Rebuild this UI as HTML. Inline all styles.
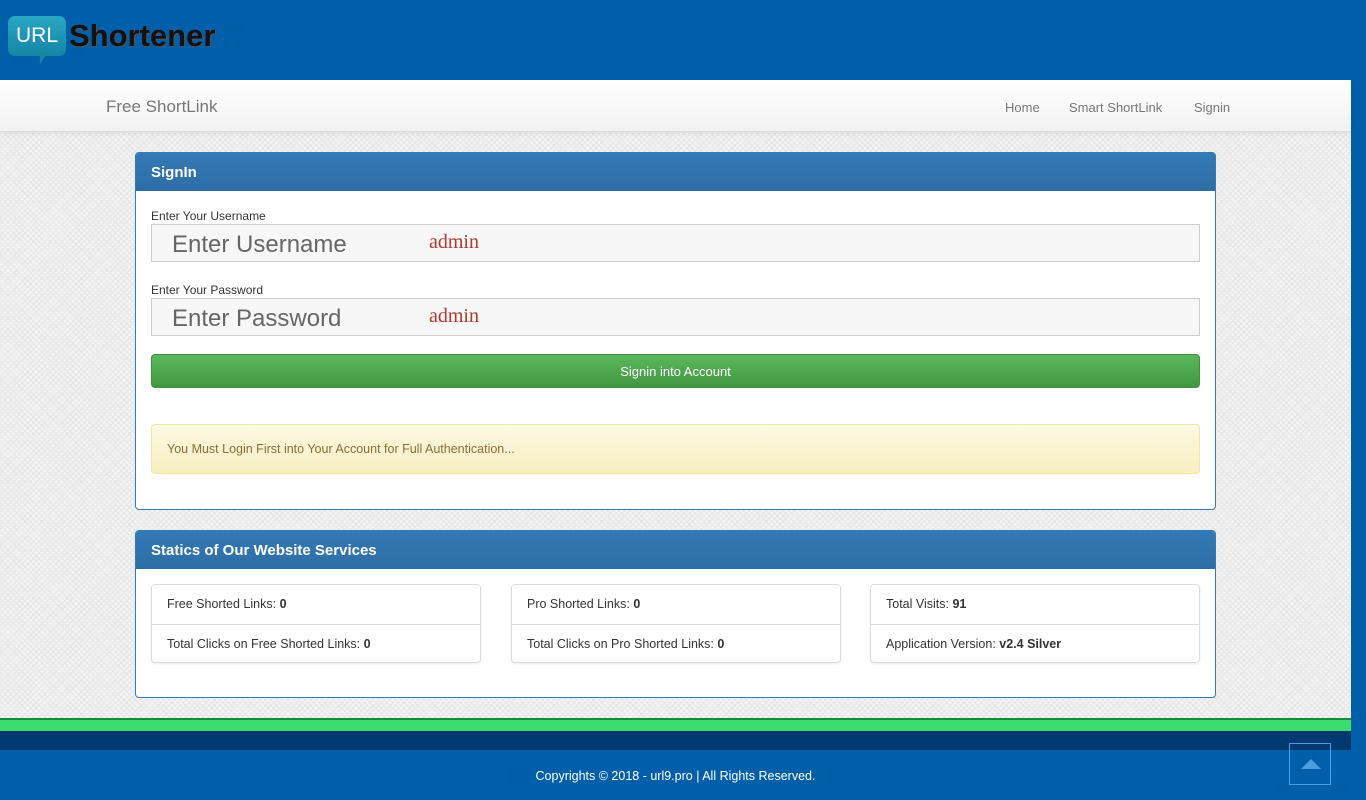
<!DOCTYPE html>
<html><head><meta charset="utf-8"><style>
*{box-sizing:border-box;margin:0;padding:0}
body{width:1366px;height:800px;overflow:hidden;font-family:"Liberation Sans",sans-serif;background:#005fa8;position:relative}
.top{position:absolute;left:0;top:0;width:1366px;height:80px;background:#005fa8}
.logo{position:absolute;left:8px;top:16px;width:58px;height:40px;background:linear-gradient(#2aa6c4,#1585a6);border-radius:7px;color:#fff;font-size:21px;line-height:40px;text-align:center}
.logo:after{content:"";position:absolute;left:32px;top:36px;border-left:8px solid #1585a6;border-bottom:12px solid transparent}
.logot{position:absolute;left:69px;top:18px;font-size:31px;font-weight:bold;color:#111;text-shadow:1px 1px 1px #555}
.main{position:absolute;left:0;top:80px;width:1351px;height:638px;background-color:#f3f3f3;background-image:repeating-linear-gradient(45deg,#e6e6e6 0 1px,transparent 1px 4px),repeating-linear-gradient(-45deg,#e6e6e6 0 1px,transparent 1px 4px)}
.nav{position:absolute;left:0;top:0;width:1351px;height:52px;background:linear-gradient(#fff,#f2f2f2);border-bottom:1px solid #ddd;box-shadow:0 2px 4px rgba(0,0,0,.06)}
.brand{position:absolute;left:106px;top:17px;font-size:17px;color:#777}
.nav a{position:absolute;top:20px;font-size:13px;color:#777}
.panel{position:absolute;left:135px;width:1081px;background:#fff;border:1px solid #337ab7;border-radius:4px;overflow:hidden}
.ph{height:38px;background:linear-gradient(#337ab7,#2e6da4);color:#fff;font-size:15px;font-weight:bold;padding:11px 15px 0}
.lbl{position:absolute;left:15px;font-size:12px;color:#333}
.inp{position:absolute;left:15px;width:1049px;height:38px;background:#f7f7f7;border:1px solid #ccc}
.inp span{position:absolute;left:20px;top:6px;font-size:24px;color:#666}
.inp i{position:absolute;left:277px;top:6px;font-style:normal;font-family:"Liberation Serif",serif;font-size:20px;color:#b03a2e}
.btn{position:absolute;left:15px;top:201px;width:1049px;height:34px;border-radius:4px;background:linear-gradient(#5cb85c,#419641);border:1px solid #3e8f3e;color:#fff;font-size:13px;text-align:center;line-height:34px}
.al{position:absolute;left:15px;top:271px;width:1049px;height:50px;border-radius:4px;background:linear-gradient(#fcf8e3,#f8efc0);border:1px solid #f5e79e;color:#8a6d3b;font-size:12.5px;padding:17px 15px 0}
.lg{position:absolute;top:53px;width:330px;height:79px;border:1px solid #ddd;border-radius:4px;box-shadow:0 1px 2px rgba(0,0,0,.08)}
.lg div{height:39px;padding:12px 15px;font-size:12.5px;color:#333}
.lg div+div{border-top:1px solid #ddd}
</style></head><body>
<div class="top"><div class="logo">URL</div><div class="logot">Shortener</div></div>
<div class="main">
<div class="nav"><div class="brand">Free ShortLink</div><a style="left:1005px">Home</a><a style="left:1069px">Smart ShortLink</a><a style="left:1194px">Signin</a></div>
<div class="panel" style="top:72px;height:358px">
<div class="ph">SignIn</div>
<div class="lbl" style="top:56px">Enter Your Username</div>
<div class="inp" style="top:71px"><span>Enter Username</span><i>admin</i></div>
<div class="lbl" style="top:130px">Enter Your Password</div>
<div class="inp" style="top:145px"><span>Enter Password</span><i>admin</i></div>
<div class="btn">Signin into Account</div>
<div class="al">You Must Login First into Your Account for Full Authentication...</div>
</div>
<div class="panel" style="top:450px;height:168px">
<div class="ph">Statics of Our Website Services</div>
<div class="lg" style="left:15px"><div>Free Shorted Links: <b>0</b></div><div>Total Clicks on Free Shorted Links: <b>0</b></div></div>
<div class="lg" style="left:375px"><div>Pro Shorted Links: <b>0</b></div><div>Total Clicks on Pro Shorted Links: <b>0</b></div></div>
<div class="lg" style="left:734px"><div>Total Visits: <b>91</b></div><div>Application Version: <b>v2.4 Silver</b></div></div>
</div>
</div>
<div style="position:absolute;left:0;top:718px;width:1351px;height:2px;background:#1a8a3a"></div>
<div style="position:absolute;left:0;top:720px;width:1351px;height:11px;background:#3ddc6f"></div>
<div style="position:absolute;left:0;top:731px;width:1351px;height:19px;background:#003a70"></div>
<div style="position:absolute;left:0;top:769px;width:1351px;text-align:center;color:#fff;font-size:12.5px">Copyrights © 2018 - url9.pro | All Rights Reserved.</div>
<div style="position:absolute;left:1289px;top:743px;width:42px;height:42px;border:1px solid #4a9de0"><div style="position:absolute;left:11px;top:15px;border-left:10px solid transparent;border-right:10px solid transparent;border-bottom:10px solid #4a9de0"></div></div>
</body></html>
